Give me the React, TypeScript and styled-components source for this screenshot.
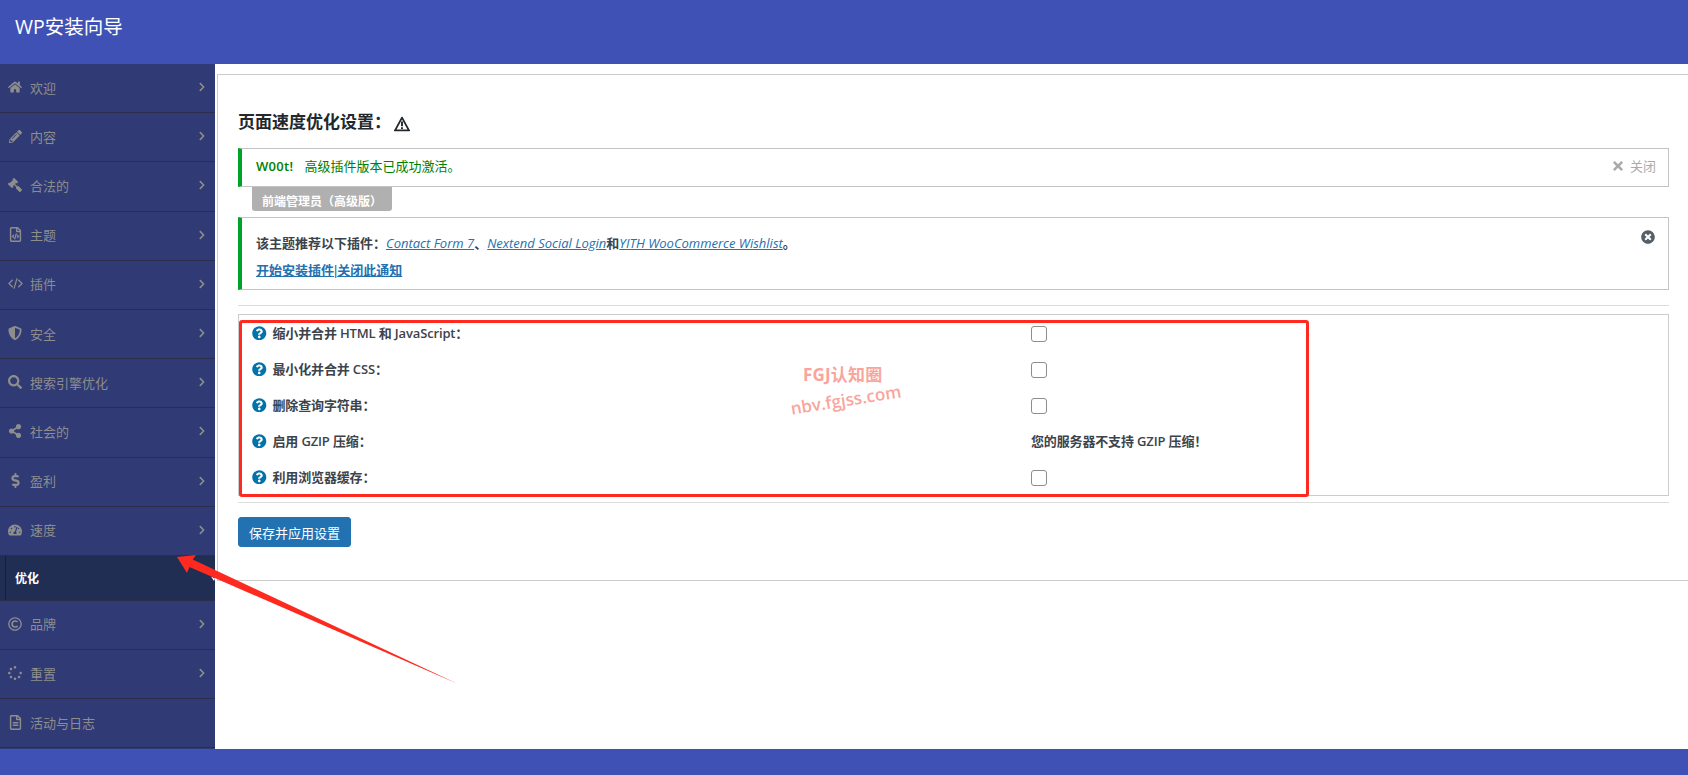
import React from "react";
import styled, { createGlobalStyle } from "styled-components";
import {
  FaHome, FaPencilAlt, FaGavel, FaRegFileCode, FaShieldAlt, FaSearch, FaShareAlt,
  FaDollarSign, FaTachometerAlt, FaRegCopyright, FaSpinner, FaRegFileAlt, FaChevronRight,
  FaQuestionCircle, FaTimes, FaTimesCircle,
} from "react-icons/fa";

const FONT = `"Open Sans", "Noto Sans CJK SC", "Noto Sans", sans-serif`;

const Global = createGlobalStyle`
  html, body { margin: 0; padding: 0; background: #fff; }
  body { font-family: ${FONT}; font-size: 13px; overflow: hidden; }
  * { box-sizing: border-box; }
`;

const Page = styled.div`
  position: relative;
  width: 1688px;
  height: 775px;
  display: flex;
  flex-direction: column;
  overflow: hidden;
`;
const Header = styled.header`
  height: 64px;
  flex: none;
  background: #3f51b5;
  color: #fff;
  font-size: 19.5px;
  line-height: 26px;
  padding: 14px 15px 0;
`;
const Body = styled.div`
  flex: 1;
  display: flex;
  min-height: 0;
`;
const Sidebar = styled.nav`
  width: 215px;
  flex: none;
  background: #303a75;
`;
const MenuRow = styled.div`
  height: 49.2px;
  display: flex;
  align-items: center;
  border-bottom: 1px solid #2b2d4b;
  color: #8d8d8d;
  font-size: 13px;
  padding: 0 8px 2px 7px;
`;
const MenuIcon = styled.span<{ $size?: number }>`
  width: 16px;
  margin-right: 7px;
  display: flex;
  justify-content: center;
  font-size: ${(p) => p.$size ?? 14}px;
`;
const Flipped = styled(FaGavel)`
  transform: scaleX(-1);
`;
const MenuLabel = styled.span`
  flex: 1;
`;
const Chevron = styled(FaChevronRight)`
  font-size: 10px;
`;
const SubRow = styled.div`
  height: 45px;
  background: #202e54;
  border-bottom: 1px solid #2b2d4b;
  padding-left: 5px;
  display: flex;
  align-items: stretch;
`;
const SubLink = styled.div`
  flex: 1;
  border-left: 1px solid #151d38;
  color: #fff;
  font-weight: 700;
  font-size: 12px;
  padding-left: 9px;
  display: flex;
  align-items: center;
`;
const Content = styled.main`
  flex: 1;
  background: #fff;
  padding: 10px 0 0 2px;
`;
const Panel = styled.section`
  height: 507px;
  border: 1px solid #ccc;
  border-right: none;
  padding: 35px 19px 0 20px;
`;
const Title = styled.h2`
  margin: 0 0 14px;
  height: 24px;
  font-size: 17px;
  line-height: 24px;
  font-weight: 700;
  color: #23282d;
  display: flex;
  align-items: center;
`;
const Warn = styled.abbr`
  margin-left: 3px;
  width: 16px;
  height: 17px;
  display: block;
  border-bottom: 1px dotted #000;
`;
const Notice = styled.div<{ $height: number }>`
  position: relative;
  height: ${(p) => p.$height}px;
  border: 1px solid #c3c4c7;
  border-left: 4px solid #00a32a;
  padding: 0 12px 0 14px;
`;
const SuccessRow = styled.div`
  height: 100%;
  display: flex;
  align-items: center;
  color: #008000;
  gap: 11px;
  padding-bottom: 4px;
`;
const Strong = styled.strong`
  font-weight: 600;
  letter-spacing: 0.3px;
`;
const Dismiss = styled.span`
  margin-left: auto;
  color: #aaa;
  display: flex;
  align-items: center;
  gap: 5px;
`;
const DismissIcon = styled(FaTimes)`
  font-size: 14px;
`;
const Tab = styled.div`
  width: 140px;
  height: 25px;
  margin: -1px 0 6px 14px;
  background: #b0b0b0;
  color: #fff;
  font-size: 12px;
  font-weight: 700;
  text-align: center;
  line-height: 32px;
  overflow: hidden;
  border-radius: 0 0 3px 3px;
`;
const RecommendLine = styled.p`
  margin: 0;
  height: 27px;
  line-height: 27px;
  color: #3c434a;
  font-weight: 600;
  &:first-child { margin-top: 12px; }
`;
const Link = styled.a`
  color: #2271b1;
  text-decoration: underline;
`;
const ItalicLink = styled(Link)`
  font-style: italic;
  font-weight: 400;
`;
const Pipe = styled.span`
  margin: 0 -2px;
  color: #2271b1;
`;
const CloseCircle = styled(FaTimesCircle)`
  position: absolute;
  right: 13px;
  top: 12px;
  font-size: 14px;
  color: #555d66;
`;
const Rule = styled.hr<{ $top: number; $bottom: number }>`
  margin: ${(p) => p.$top}px 0 ${(p) => p.$bottom}px;
  border: none;
  border-top: 1px solid #ddd;
`;
const FormBox = styled.div`
  position: relative;
  height: 182px;
  border: 1px solid #ccc;
`;
const FormRow = styled.div`
  height: 36px;
  padding-left: 13px;
  display: grid;
  grid-template-columns: 779px 1fr;
  align-items: center;
  font-weight: 600;
  color: #3c434a;
  font-size: 13px;
`;
const FormLabel = styled.label`
  display: flex;
  align-items: center;
  gap: 6px;
`;
const LabelText = styled.span`
  position: relative;
  top: -1px;
  letter-spacing: -0.15px;
`;
const NoteText = styled(LabelText)``;
const Help = styled(FaQuestionCircle)`
  font-size: 14.5px;
  color: #0073aa;
`;
const Check = styled.span`
  display: block;
  width: 16px;
  height: 16px;
  margin-top: 2px;
  border: 1px solid #8d8d8d;
  border-radius: 3px;
  background: #fff;
`;
const Highlight = styled.div`
  position: absolute;
  left: 0;
  top: 5px;
  width: 1070px;
  height: 177px;
  border: 3px solid #ff2a1f;
  border-radius: 3px;
  pointer-events: none;
`;
const SaveButton = styled.button`
  display: block;
  width: 113px;
  height: 30px;
  padding: 0;
  background: #2271b1;
  color: #fff;
  border: 1px solid #2271b1;
  border-radius: 3px;
  font-family: ${FONT};
  font-size: 13px;
  font-weight: 400;
`;
const Footer = styled.footer`
  height: 26px;
  flex: none;
  background: #3f51b5;
`;
const WatermarkTop = styled.div`
  position: absolute;
  left: 803px;
  top: 363px;
  color: #f9a59c;
  font-weight: 700;
  font-size: 17px;
  line-height: 24px;
  letter-spacing: 0.2px;
`;
const WatermarkBottom = styled.div`
  position: absolute;
  left: 790px;
  top: 389px;
  color: #f9a59c;
  font-weight: 600;
  font-size: 17px;
  line-height: 22px;
  transform: rotate(-9deg);
`;
const ArrowSvg = styled.svg`
  position: absolute;
  left: 0;
  top: 0;
  pointer-events: none;
`;

const CodeIcon = () => (
  <svg width="15" height="15" viewBox="0 0 16 16" fill="none" stroke="currentColor" strokeWidth="1.3">
    <path d="M5 4 1 8l4 4M11 4l4 4-4 4M9.6 2.5 6.4 13.5" />
  </svg>
);
const WarnIcon = () => (
  <svg width="16" height="16" viewBox="0 0 15 15" fill="none" stroke="#23282d">
    <path d="M7.5 1.5 14 13.5H1Z" strokeWidth="1.7" strokeLinejoin="round" />
    <path d="M7.5 5.2v4.4M7.5 10.5v1.7" strokeWidth="1.8" />
  </svg>
);

const menuTop: { icon: React.ReactNode; label: string; size?: number }[] = [
  { icon: <FaHome />, label: "欢迎" },
  { icon: <FaPencilAlt />, label: "内容", size: 13 },
  { icon: <Flipped />, label: "合法的" },
  { icon: <FaRegFileCode />, label: "主题", size: 15 },
  { icon: <CodeIcon />, label: "插件" },
  { icon: <FaShieldAlt />, label: "安全" },
  { icon: <FaSearch />, label: "搜索引擎优化" },
  { icon: <FaShareAlt />, label: "社会的" },
  { icon: <FaDollarSign />, label: "盈利", size: 15 },
  { icon: <FaTachometerAlt />, label: "速度" },
];
const menuBottom: { icon: React.ReactNode; label: string; arrow: boolean; size?: number }[] = [
  { icon: <FaRegCopyright />, label: "品牌", arrow: true },
  { icon: <FaSpinner />, label: "重置", arrow: true },
  { icon: <FaRegFileAlt />, label: "活动与日志", arrow: false, size: 15 },
];
const rows: { label: string; note?: string }[] = [
  { label: "缩小并合并 HTML 和 JavaScript：" },
  { label: "最小化并合并 CSS：" },
  { label: "删除查询字符串：" },
  { label: "启用 GZIP 压缩：", note: "您的服务器不支持 GZIP 压缩！" },
  { label: "利用浏览器缓存：" },
];

export default function App() {
  return (
    <Page>
      <Global />
      <Header>WP安装向导</Header>
      <Body>
        <Sidebar>
          {menuTop.map((m) => (
            <MenuRow key={m.label}>
              <MenuIcon $size={m.size}>{m.icon}</MenuIcon>
              <MenuLabel>{m.label}</MenuLabel>
              <Chevron />
            </MenuRow>
          ))}
          <SubRow>
            <SubLink>优化</SubLink>
          </SubRow>
          {menuBottom.map((m) => (
            <MenuRow key={m.label}>
              <MenuIcon $size={m.size}>{m.icon}</MenuIcon>
              <MenuLabel>{m.label}</MenuLabel>
              {m.arrow && <Chevron />}
            </MenuRow>
          ))}
        </Sidebar>
        <Content>
          <Panel>
            <Title>
              页面速度优化设置：
              <Warn>
                <WarnIcon />
              </Warn>
            </Title>
            <Notice $height={39}>
              <SuccessRow>
                <Strong>W00t!</Strong>
                <span>高级插件版本已成功激活。</span>
                <Dismiss>
                  <DismissIcon />
                  关闭
                </Dismiss>
              </SuccessRow>
            </Notice>
            <Tab>前端管理员（高级版）</Tab>
            <Notice $height={73}>
              <RecommendLine>
                该主题推荐以下插件：<ItalicLink>Contact Form 7</ItalicLink>、
                <ItalicLink>Nextend Social Login</ItalicLink>和
                <ItalicLink>YITH WooCommerce Wishlist</ItalicLink>。
              </RecommendLine>
              <RecommendLine>
                <Link>开始安装插件</Link>
                <Pipe>|</Pipe>
                <Link>关闭此通知</Link>
              </RecommendLine>
              <CloseCircle />
            </Notice>
            <Rule $top={15} $bottom={8} />
            <FormBox>
              {rows.map((r) => (
                <FormRow key={r.label}>
                  <FormLabel>
                    <Help />
                    <LabelText>{r.label}</LabelText>
                  </FormLabel>
                  {r.note ? <NoteText>{r.note}</NoteText> : <Check />}
                </FormRow>
              ))}
              <Highlight />
            </FormBox>
            <Rule $top={6} $bottom={14} />
            <SaveButton>保存并应用设置</SaveButton>
          </Panel>
        </Content>
      </Body>
      <Footer />
      <WatermarkTop>FGJ认知圈</WatermarkTop>
      <WatermarkBottom>nbv.fgjss.com</WatermarkBottom>
      <ArrowSvg width="1688" height="775" viewBox="0 0 1688 775">
        <polygon points="211,576.5 215,578.5 214,581" fill="#fff" />
        <polygon points="177,557 196,555 192.7,559.5 458,684 189.5,567 187,573" fill="#ff2a1f" />
      </ArrowSvg>
    </Page>
  );
}
